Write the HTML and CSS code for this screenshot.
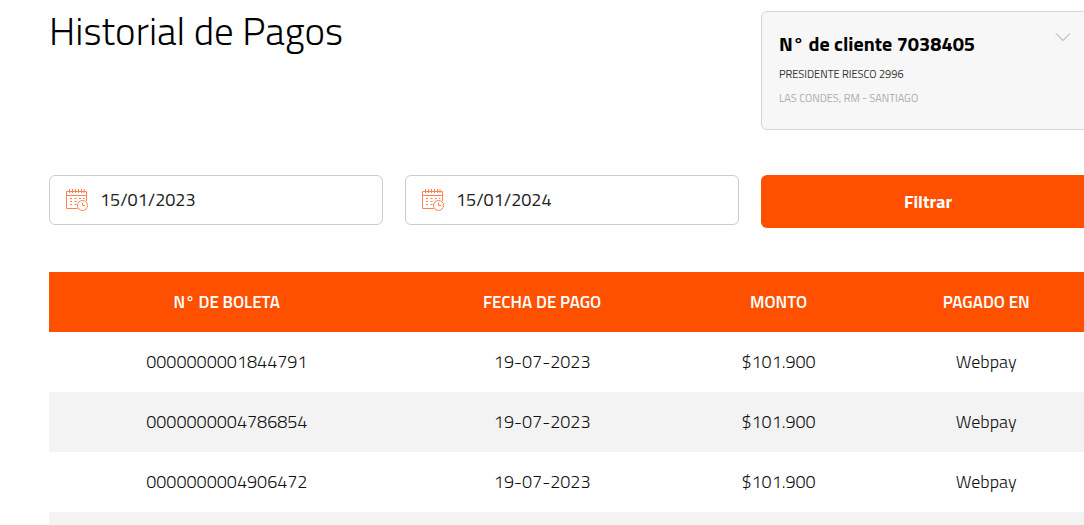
FILE: index.html
```html
<!DOCTYPE html>
<html lang="es">
<head>
  <meta charset="utf-8">
  <meta name="viewport" content="width=device-width, initial-scale=1">
  <title>Historial de Pagos</title>
  <link rel="stylesheet" href="styles.css">
</head>
<body>
  <svg width="0" height="0" class="sprite" aria-hidden="true">
    <symbol id="calendar" viewBox="0 0 24 24">
      <g fill="none" stroke="currentColor" stroke-width="1">
        <path d="M12.500 20.500H1.500V3.500H21.500V13M1.500 7.500H21.500"/>
        <path d="M4.500 1V5M7.500 1V5M10.500 1V5M13.500 1V5M16.500 1V5M19 1V5"/>
        <path d="M5 10.500H7M9.500 10.500H11.500M14 10.500H16M18 10.500H19.500M5 13.500H7M9.500 13.500H11.500M5 16.500H7M9.500 16.500H11.500"/>
        <circle cx="17.500" cy="17.500" r="5"/>
        <path d="M17.500 14.500V17.500H20"/>
      </g>
    </symbol>
  </svg>
  <main class="page">
    <header class="top">
      <h1 class="title">Historial de Pagos</h1>
      <section class="client">
        <div class="client-info">
          <h2 class="client-number">N° de cliente 7038405</h2>
          <p class="client-street">PRESIDENTE RIESCO 2996</p>
          <p class="client-city">LAS CONDES, RM - SANTIAGO</p>
        </div>
        <button class="client-toggle" type="button" aria-label="Cambiar cliente">
          <svg width="16" height="10" viewBox="0 0 16 10" fill="none" stroke="currentColor"><path d="M1 1.500L8 8.500L15 1.500"/></svg>
        </button>
      </section>
    </header>
    <form class="filters">
      <div class="field">
        <svg class="field-icon" aria-hidden="true"><use href="#calendar"/></svg>
        <input class="field-input" type="text" value="15/01/2023" aria-label="Fecha desde">
      </div>
      <div class="field">
        <svg class="field-icon" aria-hidden="true"><use href="#calendar"/></svg>
        <input class="field-input" type="text" value="15/01/2024" aria-label="Fecha hasta">
      </div>
      <button class="submit" type="button">Filtrar</button>
    </form>
    <table class="payments">
      <colgroup>
        <col class="col-bill"><col class="col-date"><col class="col-amount"><col class="col-channel">
      </colgroup>
      <thead>
        <tr><th scope="col">N° DE BOLETA</th><th scope="col">FECHA DE PAGO</th><th scope="col">MONTO</th><th scope="col">PAGADO EN</th></tr>
      </thead>
      <tbody>
        <tr><td>0000000001844791</td><td>19-07-2023</td><td>$101.900</td><td>Webpay</td></tr>
        <tr><td>0000000004786854</td><td>19-07-2023</td><td>$101.900</td><td>Webpay</td></tr>
        <tr><td>0000000004906472</td><td>19-07-2023</td><td>$101.900</td><td>Webpay</td></tr>
        <tr><td></td><td></td><td></td><td></td></tr>
      </tbody>
    </table>
  </main>
</body>
</html>
```
FILE: styles.css
```css
* {
  box-sizing: border-box;
}

body {
  margin: 0;
  height: 100vh;
  overflow: hidden;
  background: #fff;
  color: #111;
  font-family: "Titillium Web", Roboto, sans-serif;
  font-size: 18px;
  line-height: 24px;
}

.sprite {
  position: absolute;
}

/* The content runs past the right edge of the window. */
.page {
  margin: 0 -11px 0 49px;
  padding-top: 11px;
}

.top,
.filters {
  display: grid;
  grid-template-columns: repeat(3, minmax(0, 1fr));
  column-gap: 22px;
  align-items: start;
}

.title {
  grid-column: span 2;
  margin: 0;
  font-size: 39px;
  line-height: 40px;
  font-weight: 300;
  color: #000;
}

.client {
  display: flex;
  justify-content: space-between;
  align-items: flex-start;
  padding: 16px 23px 19px 17px;
  border: 1px solid #d5d5d5;
  border-radius: 6px;
  background: #f7f7f7;
}

.client-number {
  margin: 0 0 2px;
  font-size: 20px;
  line-height: 32px;
  font-weight: 700;
  color: #000;
}

.client-street,
.client-city {
  margin: 0;
  font-size: 11px;
  line-height: 24px;
}

.client-street {
  color: #333;
}

.client-city {
  color: #adadad;
}

.client-toggle {
  display: flex;
  padding: 4px 0;
  border: 0;
  background: none;
  color: #a0a0a0;
}

.filters {
  margin-top: 45px;
}

.field {
  display: flex;
  align-items: center;
  gap: 11px;
  height: 50px;
  padding: 0 15px;
  border: 1px solid #ccc;
  border-radius: 6px;
  background: #fff;
}

.field-icon {
  flex: none;
  width: 24px;
  height: 24px;
  color: #ff8253;
}

.field-input {
  flex: 1;
  min-width: 0;
  padding: 0;
  border: 0;
  outline: 0;
  background: none;
  color: #222;
  font: inherit;
}

.submit {
  height: 53px;
  border: 0;
  border-radius: 6px;
  background: #ff5000;
  color: #fff;
  font: inherit;
  font-weight: 700;
}

.payments {
  width: 100%;
  margin-top: 44px;
  border-collapse: collapse;
  table-layout: fixed;
  text-align: center;
}

.payments tr {
  height: 60px;
}

.payments th {
  padding: 0;
  background: #ff5000;
  color: #fff;
  font-size: 17px;
  font-weight: 600;
}

.payments td {
  padding: 0;
  font-weight: 300;
}

.payments tbody tr:nth-child(even) {
  background: #f3f3f3;
}

.col-bill {
  width: 34%;
}

.col-date {
  width: 26.3%;
}

.col-amount {
  width: 18.9%;
}

.col-channel {
  width: 20.8%;
}
```
